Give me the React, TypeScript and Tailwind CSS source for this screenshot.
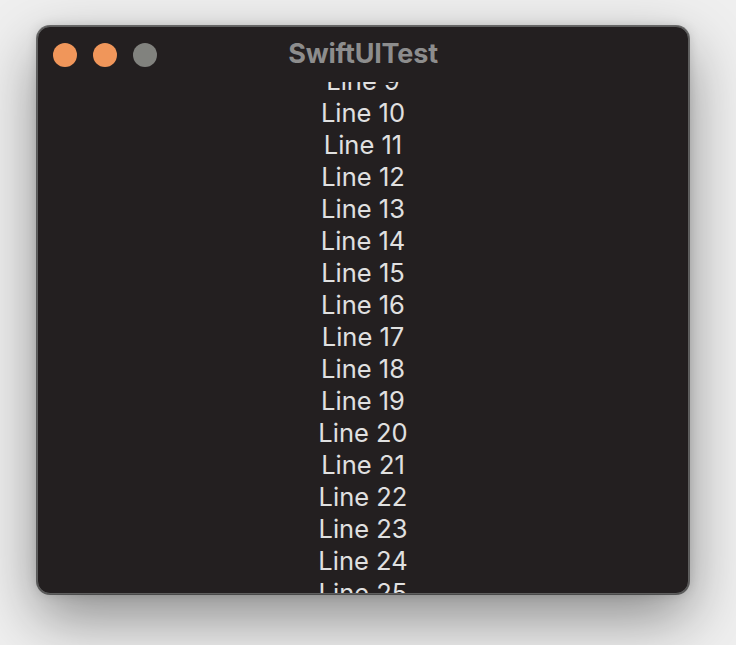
import React from "react";

const lines = Array.from({ length: 30 }, (_, i) => i + 1);

export default function App() {
  return (
    <div
      className="w-[736px] h-[645px] bg-[#efefef] pl-[37px] pt-[26px] overflow-hidden"
      style={{ fontFamily: "Inter, 'Liberation Sans', sans-serif" }}
    >
      <div className="w-[652px] h-[568px] rounded-[13px] border border-[#5f5f5f] bg-[#231f20] shadow-[0_24px_60px_rgba(0,0,0,0.42),0_0_12px_rgba(0,0,0,0.15),0_0_0_1px_rgba(0,0,0,0.5)] flex flex-col overflow-hidden">
        <div className="relative h-[55px] shrink-0 flex items-center pl-[15px] gap-[16px]">
          <span className="w-[24px] h-[24px] rounded-full bg-[#f0965a]" />
          <span className="w-[24px] h-[24px] rounded-full bg-[#f0965a]" />
          <span className="w-[24px] h-[24px] rounded-full bg-[#81827e]" />
          <div className="absolute inset-0 flex items-center justify-center text-[27px] font-bold text-[#8d8d8d] tracking-[-0.2px]">
            SwiftUITest
          </div>
        </div>
        <div className="flex-1 overflow-hidden">
          <div className="mt-[-273px] flex flex-col items-center">
            {lines.map((n) => (
              <div key={n} className="h-[32px] leading-[32px] text-[25.5px] text-[#e0e0e0]">
                Line {n}
              </div>
            ))}
          </div>
        </div>
      </div>
    </div>
  );
}
